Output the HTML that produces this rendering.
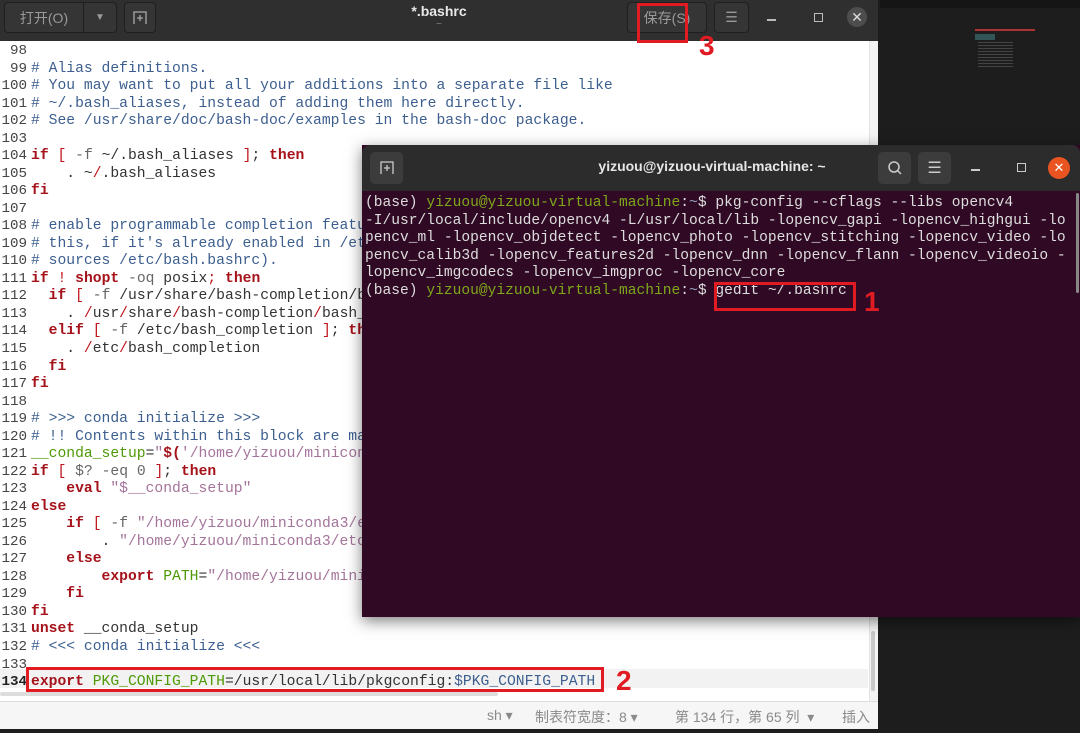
<!DOCTYPE html>
<html><head><meta charset="utf-8"><style>
*{margin:0;padding:0;box-sizing:border-box}
body{width:1080px;height:733px;overflow:hidden;background:#1d1d1d;position:relative;font-family:"Liberation Sans","Noto Sans CJK SC",sans-serif}
.abs{position:absolute}
.gtitle{left:0;top:0;width:878px;height:41px;background:#2f2f2f}
.btn{position:absolute;border:1px solid #1f1f1f;border-radius:4px;background:#353535;color:#9a9a9a;font-size:14px;display:flex;align-items:center;justify-content:center}
.editor{left:0;top:41px;width:878px;height:660px;background:#fff}
.ln{position:absolute;left:0;width:27px;text-align:right;font-family:"Liberation Mono",monospace;font-size:14.2px;color:#444;font-style:normal}
.code{position:absolute;left:31px;font-family:"Liberation Mono",monospace;font-size:14.7px;color:#333;white-space:pre;font-style:normal}
.c{color:#3d5f8f}.k{color:#a5121a;font-weight:bold}.r{color:#c0151c}.s{color:#a4749a}.g{color:#4e9a06}.d{color:#666}
.term{left:362px;top:145px;width:718px;height:472px;background:#300a24;box-shadow:0 4px 14px rgba(0,0,0,.5)}
.ttitle{left:0;top:0;width:718px;height:46px;background:#2c2c2c;border-radius:8px 8px 0 0}
.tbtn{position:absolute;width:33px;height:32px;background:#3c3c3c;border-radius:5px;color:#ccc;display:flex;align-items:center;justify-content:center}
.tt{position:absolute;left:3px;font-family:"Liberation Mono",monospace;font-size:14.6px;color:#ddd;white-space:pre}
.tg{color:#7ea81a}.tb{color:#8ea0c0}
.box{position:absolute;border:3px solid #e11b22}
.num{position:absolute;color:#e11b22;font-weight:bold;font-size:28px;font-family:"Liberation Sans",sans-serif}
</style></head><body>
<div class="abs" style="left:880px;top:0;width:200px;height:8px;background:#151515"></div>
<div class="abs" style="left:975px;top:29px;width:60px;height:2px;background:#a33"></div>
<div class="abs" style="left:975px;top:34px;width:20px;height:6px;background:#355"></div>
<div class="abs" style="left:978px;top:42px;width:35px;height:25px;background:repeating-linear-gradient(#555 0 1px,transparent 1px 3px);opacity:.7"></div>

<div class="abs gtitle">
 <div class="btn" style="left:4px;top:2px;width:80px;height:31px;border-radius:4px 0 0 4px">打开(O)</div>
 <div class="btn" style="left:83px;top:2px;width:34px;height:31px;border-radius:0 4px 4px 0;font-size:10px">▼</div>
 <div class="btn" style="left:124px;top:2px;width:32px;height:31px"><svg width="14" height="14"><path d="M1 13V1h12v12M7 4v6M4 7h6" stroke="#aaa" fill="none" stroke-width="1.3"/></svg></div>
 <div class="abs" style="left:380px;top:3px;width:118px;text-align:center;color:#e8e8e8;font-weight:bold;font-size:14px">*.bashrc</div>
 <div class="abs" style="left:380px;top:19px;width:118px;text-align:center;color:#888;font-size:10px">~</div>
 <div class="btn" style="left:627px;top:2px;width:80px;height:31px">保存(S)</div>
 <div class="btn" style="left:714px;top:2px;width:35px;height:31px">☰</div>
 <div class="abs" style="left:767px;top:19px;width:9px;height:1.5px;background:#bbb"></div>
 <div class="abs" style="left:814px;top:13px;width:9px;height:9px;border:1.5px solid #bbb"></div>
 <div class="abs" style="left:847px;top:7px;width:20px;height:20px;border-radius:50%;background:#4d4d4d;color:#ddd;font-size:14px;text-align:center;line-height:20px">✕</div>
</div>

<div class="abs editor">
<div class="abs" style="left:0;top:628px;width:868px;height:19px;background:#f2f2f2"></div>
<div class="abs" style="left:869px;top:0;width:9px;height:660px;background:#f4f4f4;border-left:1px solid #e2e2e2"></div>
<div class="abs" style="left:871px;top:590px;width:4px;height:60px;background:#c8c8c8;border-radius:2px"></div>
<div class="abs" style="left:0;top:651px;width:498px;height:4px;background:#ddd;border-radius:2px"></div>
</div>
<div id="ed"></div>
<script>
var L=[
[98,''],[99,'<span class=c># Alias definitions.</span>'],
[100,'<span class=c># You may want to put all your additions into a separate file like</span>'],
[101,'<span class=c># ~/.bash_aliases, instead of adding them here directly.</span>'],
[102,'<span class=c># See /usr/share/doc/bash-doc/examples in the bash-doc package.</span>'],
[103,''],
[104,'<span class=k>if</span> <span class=r>[</span> <span class=d>-f</span> ~/.bash_aliases <span class=r>]</span>; <span class=k>then</span>'],
[105,'    . ~<span class=r>/</span>.bash_aliases'],[106,'<span class=k>fi</span>'],[107,''],
[108,'<span class=c># enable programmable completion features (you don\'t need to enable</span>'],
[109,'<span class=c># this, if it\'s already enabled in /etc/bash.bashrc and /etc/profile</span>'],
[110,'<span class=c># sources /etc/bash.bashrc).</span>'],
[111,'<span class=k>if</span> <span class=r>!</span> <span class=k>shopt</span> <span class=d>-oq</span> posix<span class=r>;</span> <span class=k>then</span>'],
[112,'  <span class=k>if</span> <span class=r>[</span> <span class=d>-f</span> /usr/share/bash-completion/bash_completion <span class=r>]</span>; <span class=k>then</span>'],
[113,'    . <span class=r>/</span>usr<span class=r>/</span>share<span class=r>/</span>bash-completion<span class=r>/</span>bash_completion'],
[114,'  <span class=k>elif</span> <span class=r>[</span> <span class=d>-f</span> /etc/bash_completion <span class=r>]</span>; <span class=k>then</span>'],
[115,'    . <span class=r>/</span>etc<span class=r>/</span>bash_completion'],[116,'  <span class=k>fi</span>'],[117,'<span class=k>fi</span>'],[118,''],
[119,'<span class=c># >>> conda initialize >>></span>'],
[120,'<span class=c># !! Contents within this block are managed by \'conda init\' !!</span>'],
[121,'<span class=g>__conda_setup</span>=<span class=s>"</span><span class=k>$(</span><span class=s>\'/home/yizuou/miniconda3/bin/conda\'</span>'],
[122,'<span class=k>if</span> <span class=r>[</span> <span class=d>$? -eq 0</span> <span class=r>]</span>; <span class=k>then</span>'],
[123,'    <span class=k>eval</span> <span class=s>"$__conda_setup"</span>'],[124,'<span class=k>else</span>'],
[125,'    <span class=k>if</span> <span class=r>[</span> <span class=d>-f</span> <span class=s>"/home/yizuou/miniconda3/etc/profile.d/conda.sh"</span>'],
[126,'        . <span class=s>"/home/yizuou/miniconda3/etc/profile.d/conda.sh"</span>'],
[127,'    <span class=k>else</span>'],[128,'        <span class=k>export</span> <span class=g>PATH</span>=<span class=s>"/home/yizuou/miniconda3/bin:$PATH"</span>'],
[129,'    <span class=k>fi</span>'],[130,'<span class=k>fi</span>'],
[131,'<span class=k>unset</span> __conda_setup'],[132,'<span class=c># &lt;&lt;&lt; conda initialize &lt;&lt;&lt;</span>'],[133,''],
[134,'<span class=k>export</span> <span class=g>PKG_CONFIG_PATH</span>=/usr/local/lib/pkgconfig:<span class=c>$PKG_CONFIG_PATH</span>']];
var h='';L.forEach(function(a,i){var y=42+i*17.53;h+='<div class=ln style="top:'+(y+1)+'px'+(a[0]==134?';font-weight:bold;color:#222':'')+'">'+a[0]+'</div><div class=code style="top:'+(y+1)+'px">'+a[1]+'</div>';});
document.getElementById('ed').innerHTML=h;
</script>

<div class="abs" style="left:0;top:701px;width:878px;height:28px;background:#f6f6f6;border-top:1px solid #ddd;color:#8a8a8a;font-size:14px">
 <span class="abs" style="left:487px;top:5px">sh ▾</span>
 <span class="abs" style="left:535px;top:5px">制表符宽度：8 ▾</span>
 <span class="abs" style="left:675px;top:5px">第 134 行，第 65 列 &nbsp;▾</span>
 <span class="abs" style="left:842px;top:5px">插入</span>
</div>

<div class="abs term">
 <div class="abs ttitle">
  <div class="tbtn" style="left:8px;top:7px"><svg width="14" height="14"><path d="M1 13V1h12v12M7 4v6M4 7h6" stroke="#ccc" fill="none" stroke-width="1.3"/></svg></div>
  <div class="abs" style="left:200px;top:13px;width:300px;text-align:center;color:#e6e6e6;font-weight:bold;font-size:14px">yizuou@yizuou-virtual-machine: ~</div>
  <div class="tbtn" style="left:516px;top:7px"><svg width="16" height="16"><circle cx="7" cy="7" r="5" stroke="#ccc" fill="none" stroke-width="1.5"/><path d="M10.5 10.5L14 14" stroke="#ccc" stroke-width="1.5"/></svg></div>
  <div class="tbtn" style="left:556px;top:7px">☰</div>
  <div class="abs" style="left:609px;top:24px;width:9px;height:1.5px;background:#ccc"></div>
  <div class="abs" style="left:655px;top:18px;width:9px;height:9px;border:1.5px solid #ccc"></div>
  <div class="abs" style="left:686px;top:12px;width:22px;height:22px;border-radius:50%;background:#e95420;color:#fff;font-size:13px;text-align:center;line-height:22px">✕</div>
 </div>
 <div class="tt" style="top:50px">(base) <span class="tg">yizuou@yizuou-virtual-machine</span>:<span class="tb">~</span>$ pkg-config --cflags --libs opencv4</div>
 <div class="tt" style="top:67.5px">-I/usr/local/include/opencv4 -L/usr/local/lib -lopencv_gapi -lopencv_highgui -lo</div>
 <div class="tt" style="top:85px">pencv_ml -lopencv_objdetect -lopencv_photo -lopencv_stitching -lopencv_video -lo</div>
 <div class="tt" style="top:102.5px">pencv_calib3d -lopencv_features2d -lopencv_dnn -lopencv_flann -lopencv_videoio -</div>
 <div class="tt" style="top:120px">lopencv_imgcodecs -lopencv_imgproc -lopencv_core</div>
 <div class="tt" style="top:137.5px">(base) <span class="tg">yizuou@yizuou-virtual-machine</span>:<span class="tb">~</span>$ gedit ~/.bashrc</div>
 <div class="abs" style="left:714px;top:48px;width:3px;height:100px;background:#888;border-radius:2px"></div>
</div>

<div class="box" style="left:637px;top:3px;width:51px;height:40px"></div>
<div class="num" style="left:699px;top:30px">3</div>
<div class="box" style="left:714px;top:282px;width:142px;height:29px"></div>
<div class="num" style="left:864px;top:286px">1</div>
<div class="box" style="left:26px;top:667px;width:578px;height:25px"></div>
<div class="num" style="left:616px;top:665px">2</div>
</body></html>
